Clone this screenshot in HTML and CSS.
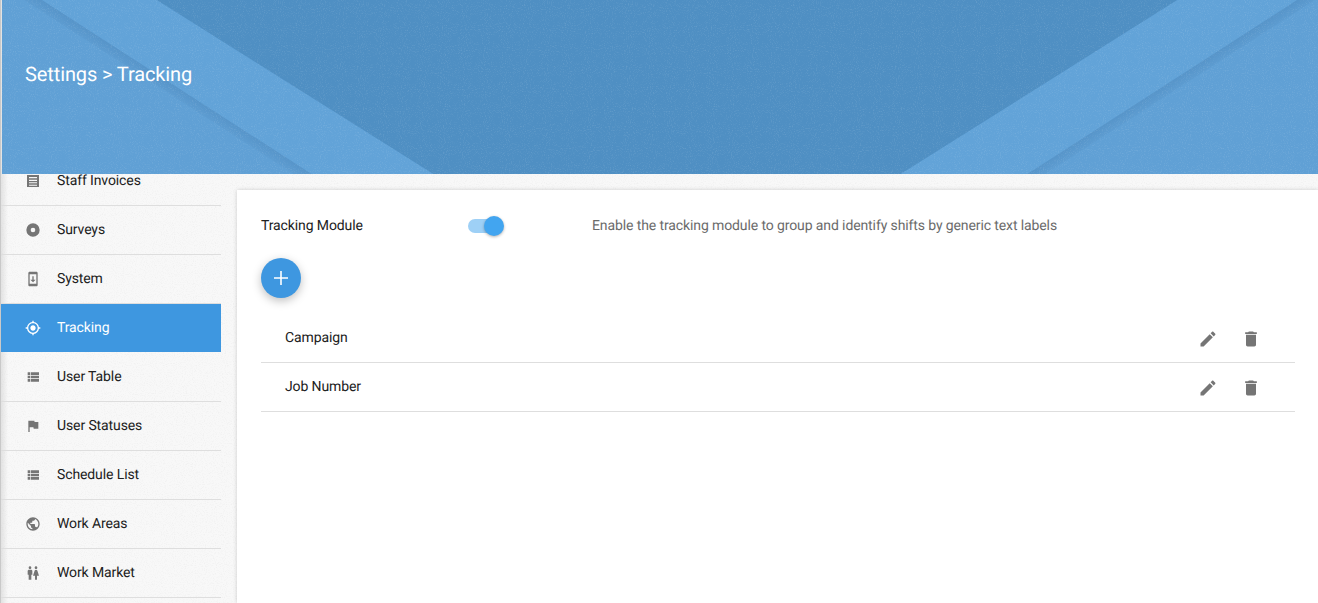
FILE: index.html
```html
<!DOCTYPE html>
<html lang="en">
<head>
<meta charset="utf-8">
<title>Settings &gt; Tracking</title>
<link rel="stylesheet" href="styles.css">
</head>
<body>
<header class="header">
  <svg class="header-art" viewBox="0 0 1318 174" preserveAspectRatio="none" aria-hidden="true">
    <defs>
      <linearGradient id="shadeL" gradientUnits="userSpaceOnUse" x1="175" y1="87" x2="167" y2="99.500">
        <stop offset="0" stop-color="#4f8bbf" stop-opacity=".55"/>
        <stop offset="1" stop-color="#4f8bbf" stop-opacity="0"/>
      </linearGradient>
      <linearGradient id="shadeR" gradientUnits="userSpaceOnUse" x1="1162" y1="87" x2="1170" y2="99.500">
        <stop offset="0" stop-color="#4f8bbf" stop-opacity=".55"/>
        <stop offset="1" stop-color="#4f8bbf" stop-opacity="0"/>
      </linearGradient>
      <filter id="grain" x="0" y="0" width="100%" height="100%">
        <feTurbulence type="fractalNoise" baseFrequency="0.95" numOctaves="2" seed="4"/>
        <feColorMatrix type="matrix" values="0 0 0 0 1  0 0 0 0 1  0 0 0 0 1  0 0 0 3 -1.550"/>
      </filter>
    </defs>
    <rect class="art-dark" x="0" y="0" width="1318" height="174"/>
    <polygon class="art-band" points="0,0 155,0 432,174 0,174"/>
    <polygon class="art-band" points="1318,0 1177,0 900,174 1318,174"/>
    <polygon class="art-base" points="0,0 40,0 310,174 0,174"/>
    <polygon class="art-base" points="1318,0 1297,0 1027,174 1318,174"/>
    <polygon fill="url(#shadeL)" points="40,0 310,174 292,174 22,0"/>
    <polygon fill="url(#shadeR)" points="1297,0 1027,174 1045,174 1315,0"/>
    <rect class="art-grain" filter="url(#grain)" x="0" y="0" width="1318" height="174"/>
  </svg>
  <h1 class="title">Settings &gt; Tracking</h1>
</header>
<div class="page">
  <nav class="sidebar">
    <ul class="menu">
      <li class="menu-item">
        <svg class="menu-icon" viewBox="0 0 24 24"><path fill-rule="evenodd" d="M3 3h18v18H3zM6 6v2h12V6zM6 10v2h12v-2zM6 14v1.500h12V14zM6 17.500V19h12v-1.500z"/></svg>
        <span>Staff Invoices</span>
      </li>
      <li class="menu-item">
        <svg class="menu-icon" viewBox="0 0 24 24"><path fill-rule="evenodd" d="M12 2a10 10 0 1 0 0 20a10 10 0 1 0 0-20zM12 8.500a3.500 3.500 0 1 1 0 7a3.500 3.500 0 1 1 0-7z"/></svg>
        <span>Surveys</span>
      </li>
      <li class="menu-item">
        <svg class="menu-icon" viewBox="0 0 24 24"><path d="M17 1.010L7 1c-1.100 0-2 .9-2 2v18c0 1.100.9 2 2 2h10c1.100 0 2-.9 2-2V3c0-1.100-.9-1.990-2-1.990zM17 19H7V5h10v14zm-1-6h-3V8h-2v5H8l4 4 4-4z"/></svg>
        <span>System</span>
      </li>
      <li class="menu-item is-active">
        <svg class="menu-icon" viewBox="0 0 24 24"><path d="M12 8c-2.210 0-4 1.790-4 4s1.790 4 4 4 4-1.790 4-4-1.790-4-4-4zm8.940 3c-.46-4.170-3.770-7.480-7.940-7.940V1h-2v2.060C6.830 3.520 3.520 6.830 3.060 11H1v2h2.060c.46 4.170 3.770 7.480 7.940 7.940V23h2v-2.060c4.170-.46 7.480-3.770 7.940-7.940H23v-2h-2.060zM12 19c-3.870 0-7-3.130-7-7s3.130-7 7-7 7 3.130 7 7-3.130 7-7 7z"/></svg>
        <span>Tracking</span>
      </li>
      <li class="menu-item">
        <svg class="menu-icon" viewBox="0 0 24 24"><path d="M4 14h4v-4H4v4zm0 5h4v-4H4v4zM4 9h4V5H4v4zm5 5h12v-4H9v4zm0 5h12v-4H9v4zM9 5v4h12V5H9z"/></svg>
        <span>User Table</span>
      </li>
      <li class="menu-item">
        <svg class="menu-icon" viewBox="0 0 24 24"><path d="M14.400 6L14 4H5v17h2v-7h5.600l.4 2h7V6z"/></svg>
        <span>User Statuses</span>
      </li>
      <li class="menu-item">
        <svg class="menu-icon" viewBox="0 0 24 24"><path d="M4 14h4v-4H4v4zm0 5h4v-4H4v4zM4 9h4V5H4v4zm5 5h12v-4H9v4zm0 5h12v-4H9v4zM9 5v4h12V5H9z"/></svg>
        <span>Schedule List</span>
      </li>
      <li class="menu-item">
        <svg class="menu-icon" viewBox="0 0 24 24"><path d="M12 2C6.480 2 2 6.480 2 12s4.480 10 10 10 10-4.480 10-10S17.520 2 12 2zm-1 17.930c-3.950-.49-7-3.850-7-7.930 0-.62.08-1.210.21-1.790L9 15v1c0 1.100.9 2 2 2v1.930zm6.900-2.540c-.26-.81-1-1.390-1.900-1.390h-1v-3c0-.55-.45-1-1-1H8v-2h2c.55 0 1-.45 1-1V7h2c1.100 0 2-.9 2-2v-.41c2.930 1.190 5 4.060 5 7.410 0 2.080-.8 3.970-2.100 5.390z"/></svg>
        <span>Work Areas</span>
      </li>
      <li class="menu-item">
        <svg class="menu-icon" viewBox="0 0 24 24"><path d="M5.500 22v-7.500H4V9c0-1.100.9-2 2-2h3c1.100 0 2 .9 2 2v5.500H9.500V22h-4zM18 22v-6h3l-2.540-7.630C18.180 7.550 17.420 7 16.560 7h-.12c-.86 0-1.630.55-1.900 1.370L12 16h3v6h3zM7.500 6c1.110 0 2-.89 2-2s-.89-2-2-2-2 .89-2 2 .89 2 2 2zm9 0c1.110 0 2-.89 2-2s-.89-2-2-2-2 .89-2 2 .89 2 2 2z"/></svg>
        <span>Work Market</span>
      </li>
    </ul>
  </nav>
  <main class="card">
    <div class="module-row">
      <span class="module-label">Tracking Module</span>
      <span class="switch"><span class="switch-track"></span><span class="switch-thumb"></span></span>
      <span class="module-help">Enable the tracking module to group and identify shifts by generic text labels</span>
    </div>
    <button class="fab" type="button" aria-label="Add">
      <svg class="fab-icon" viewBox="0 0 24 24"><path d="M19 12.800h-6.200V19h-1.600v-6.200H5v-1.600h6.200V5h1.600v6.200H19v1.600z"/></svg>
    </button>
    <ul class="labels">
      <li class="label-row">
        <span class="label-name">Campaign</span>
        <svg class="action-icon" viewBox="0 0 24 24"><path d="M3 17.250V21h3.750L17.810 9.940l-3.750-3.750L3 17.250zM20.710 7.040c.39-.39.39-1.020 0-1.410l-2.340-2.340c-.39-.39-1.020-.39-1.410 0l-1.830 1.830 3.750 3.750 1.830-1.830z"/></svg>
        <svg class="action-icon" viewBox="0 0 24 24"><path d="M6 19c0 1.100.9 2 2 2h8c1.100 0 2-.9 2-2V7H6v12zM19 4h-3.500l-1-1h-5l-1 1H5v2h14V4z"/></svg>
      </li>
      <li class="label-row">
        <span class="label-name">Job Number</span>
        <svg class="action-icon" viewBox="0 0 24 24"><path d="M3 17.250V21h3.750L17.810 9.940l-3.750-3.750L3 17.250zM20.710 7.040c.39-.39.39-1.020 0-1.410l-2.340-2.340c-.39-.39-1.020-.39-1.410 0l-1.830 1.830 3.750 3.750 1.830-1.830z"/></svg>
        <svg class="action-icon" viewBox="0 0 24 24"><path d="M6 19c0 1.100.9 2 2 2h8c1.100 0 2-.9 2-2V7H6v12zM19 4h-3.500l-1-1h-5l-1 1H5v2h14V4z"/></svg>
      </li>
    </ul>
  </main>
</div>
</body>
</html>
```

FILE: styles.css
```css
* { box-sizing: border-box; }
html, body { height: 100%; }
body {
  margin: 0;
  height: 603px;
  overflow: hidden;
  display: flex;
  flex-direction: column;
  font-family: Roboto, "Liberation Sans", sans-serif;
  font-size: 14px;
  letter-spacing: -0.11px;
  text-rendering: geometricPrecision;
  color: #212121;
  background-color: #f8f8f8;
  background-image:
    linear-gradient(90deg, #c9c9c9 0, #c9c9c9 1px, rgba(200, 200, 200, .45) 1px, rgba(200, 200, 200, 0) 8px),
    url("data:image/svg+xml,%3Csvg xmlns='http://www.w3.org/2000/svg' width='300' height='300'%3E%3Cfilter id='n' x='0' y='0' width='100%25' height='100%25'%3E%3CfeTurbulence type='fractalNoise' baseFrequency='0.9' numOctaves='2' seed='7' stitchTiles='stitch'/%3E%3CfeColorMatrix type='matrix' values='0 0 0 0 0.6 0 0 0 0 0.6 0 0 0 0 0.6 0 0 0 3 -1.45'/%3E%3C/filter%3E%3Crect width='300' height='300' filter='url(%23n)' opacity='.16'/%3E%3C/svg%3E");
  padding-left: 1px;
}
.header {
  position: relative;
  height: 174px;
  flex: none;
  margin-left: 1px;
  overflow: hidden;
  background: #4f8fc3;
}
.header-art {
  position: absolute;
  left: 0;
  top: 0;
  width: 100%;
  height: 100%;
}
.art-dark { fill: #4f8fc3; }
.art-band { fill: #62a3d8; }
.art-base { fill: #60a0d5; }
.art-grain { fill: #fff; opacity: .1; }
.title {
  position: relative;
  margin: 0;
  padding: 62px 0 0 23px;
  font-size: 20px;
  font-weight: 400;
  line-height: 24px;
  color: #fff;
}
.page {
  flex: 1;
  min-height: 0;
  display: flex;
  align-items: flex-start;
}
.sidebar {
  width: 220px;
  height: 429px;
  flex: none;
  overflow: hidden;
}
.menu {
  list-style: none;
  margin: -17px 0 0;
  padding: 0;
}
.menu-item {
  height: 49px;
  display: flex;
  align-items: center;
  padding-left: 24px;
  gap: 16px;
  border-bottom: 1px solid #dedede;
  color: #212121;
}
.menu-icon {
  width: 16px;
  height: 16px;
  flex: none;
  fill: #757575;
}
.is-active {
  background: #3e97e0;
  color: #fff;
  border-bottom-color: transparent;
  background-clip: padding-box;
}
.is-active .menu-icon { fill: #fff; }
.card {
  flex: 1;
  height: 413px;
  margin: 16px 0 0 16px;
  padding: 20px 23px 0 24px;
  background: #fff;
  box-shadow: 0 0 4px rgba(0, 0, 0, .18);
}
.module-row {
  display: flex;
  align-items: center;
  height: 32px;
}
.module-label { width: 207px; color: #212121; }
.switch {
  position: relative;
  width: 36px;
  height: 20px;
  margin-right: 88px;
  display: block;
}
.switch-track {
  position: absolute;
  left: 0;
  top: 3px;
  width: 34px;
  height: 14px;
  border-radius: 7px;
  background: #9ed0f6;
}
.switch-thumb {
  position: absolute;
  left: 16px;
  top: 0;
  width: 20px;
  height: 20px;
  border-radius: 50%;
  background: #42a5f0;
  box-shadow: 0 1px 3px rgba(0, 0, 0, .3);
}
.module-help { color: #6b6b6b; }
.fab {
  display: flex;
  align-items: center;
  justify-content: center;
  width: 40px;
  height: 40px;
  margin: 16px 0 0;
  padding: 0;
  border: 0;
  border-radius: 50%;
  background: #3e97e0;
  box-shadow: 0 3px 10px rgba(0, 0, 0, .25);
}
.fab-icon { width: 24px; height: 24px; fill: #fff; }
.labels {
  list-style: none;
  margin: 16px 0 0;
  padding: 0;
}
.label-row {
  display: flex;
  align-items: center;
  height: 49px;
  padding-left: 24px;
  border-bottom: 1px solid #dedede;
}
.label-name { flex: 1; color: #212121; }
.action-icon {
  width: 20px;
  height: 20px;
  flex: none;
  fill: #757575;
  margin-right: 23px;
  position: relative;
  top: 1px;
}
.action-icon:last-child { margin-right: 34px; }
```
